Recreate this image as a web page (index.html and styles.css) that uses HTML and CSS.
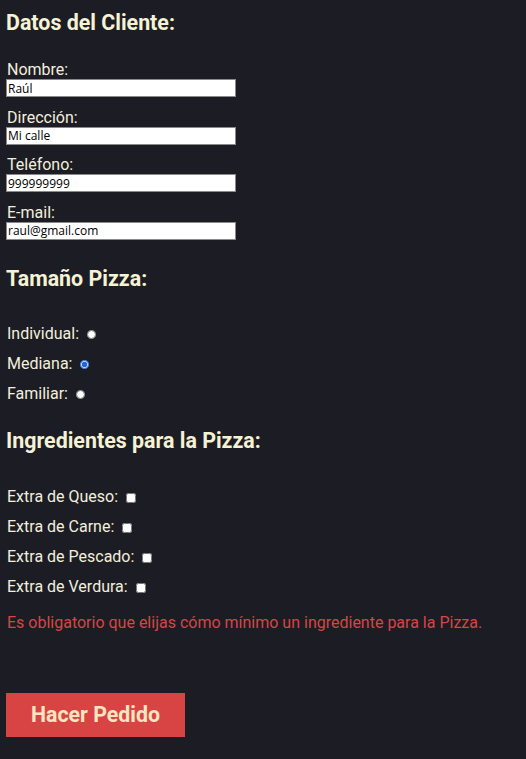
FILE: index.html
```html
<!DOCTYPE html>
<html lang="es">
<head>
<meta charset="utf-8">
<title>Pedido Pizza</title>
<link rel="stylesheet" href="styles.css">
</head>
<body>
<form class="form">
  <h2 class="title">Datos del Cliente:</h2>
  <div class="fields">
    <div class="field">
      <label class="label" for="nombre">Nombre:</label>
      <input class="text" id="nombre" type="text" value="Raúl">
    </div>
    <div class="field">
      <label class="label" for="dir">Dirección:</label>
      <input class="text" id="dir" type="text" value="Mi calle">
    </div>
    <div class="field">
      <label class="label" for="tel">Teléfono:</label>
      <input class="text" id="tel" type="text" value="999999999">
    </div>
    <div class="field">
      <label class="label" for="mail">E-mail:</label>
      <input class="text" id="mail" type="text" value="raul@gmail.com">
    </div>
  </div>

  <h2 class="title title-size">Tamaño Pizza:</h2>
  <div class="options">
    <label class="option">Individual: <input class="radio" type="radio" name="size"></label>
    <label class="option">Mediana: <input class="radio" type="radio" name="size" checked></label>
    <label class="option">Familiar: <input class="radio" type="radio" name="size"></label>
  </div>

  <h2 class="title title-ing">Ingredientes para la Pizza:</h2>
  <div class="options options-ing">
    <label class="option">Extra de Queso: <input class="check" type="checkbox"></label>
    <label class="option">Extra de Carne: <input class="check" type="checkbox"></label>
    <label class="option">Extra de Pescado: <input class="check" type="checkbox"></label>
    <label class="option">Extra de Verdura: <input class="check" type="checkbox"></label>
  </div>

  <p class="error">Es obligatorio que elijas cómo mínimo un ingrediente para la Pizza.</p>

  <button class="submit" type="button">Hacer Pedido</button>
</form>
</body>
</html>
```

FILE: styles.css
```css
html, body {
  margin: 0;
  padding: 0;
  background: #1c1c24;
}

body {
  font-family: Roboto, "Liberation Sans", sans-serif;
  color: #f2efdc;
  font-size: 16px;
}

.form {
  padding: 11px 6px 20px 6px;
  display: flex;
  flex-direction: column;
  align-items: flex-start;
}

.title {
  margin: 0;
  font-size: 21.4px;
  font-weight: 700;
  line-height: 23px;
  color: #f6f2d4;
}

.fields {
  display: flex;
  flex-direction: column;
  gap: 10.5px;
  margin-top: 26px;
}

.field {
  display: flex;
  flex-direction: column;
  align-items: flex-start;
}

.label {
  line-height: 19px;
  padding-left: 1px;
}

.text {
  box-sizing: border-box;
  width: 230px;
  height: 18px;
  margin: 0;
  padding: 0 1px;
  border: 1px solid #8a8a8a;
  background: #ffffff;
  color: #000000;
  font-family: "Open Sans", "DejaVu Sans", sans-serif;
  font-size: 12px;
  line-height: 16px;
  outline: none;
}

.title-size {
  margin-top: 27px;
}

.options {
  display: flex;
  flex-direction: column;
  gap: 11px;
  margin-top: 34px;
}

.option {
  line-height: 19px;
  padding-left: 1px;
  display: flex;
  align-items: center;
  white-space: pre;
}

.radio {
  width: 9px;
  height: 9px;
  margin: 3px 0 0 4px;
  accent-color: #1a66e0;
}

.check {
  width: 10px;
  height: 10px;
  margin: 3px 0 0 4px;
}

.title-ing {
  margin-top: 26px;
}

.options-ing {
  margin-top: 35px;
}

.error {
  margin: 17px 0 0 0;
  line-height: 19px;
  padding-left: 1px;
  color: #d84545;
}

.submit {
  margin-top: 61px;
  width: 179px;
  height: 44px;
  border: none;
  background: #d84444;
  color: #fbe6c2;
  font-family: Roboto, "Liberation Sans", sans-serif;
  font-weight: 700;
  font-size: 21.3px;
  padding: 0;
  cursor: pointer;
}
```
